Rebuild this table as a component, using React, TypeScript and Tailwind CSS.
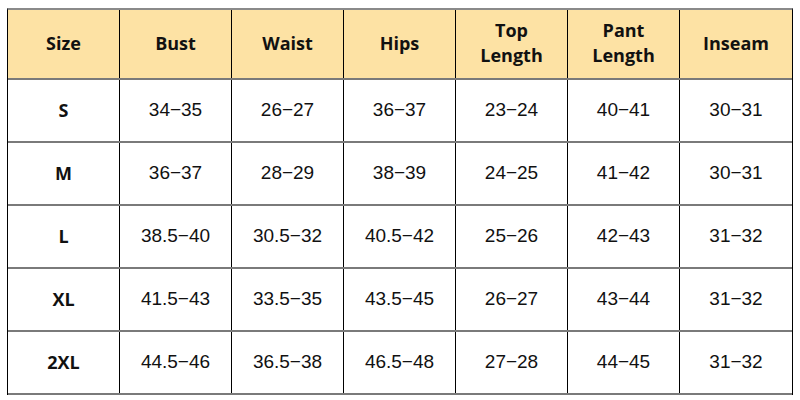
const headers = ["Size", "Bust", "Waist", "Hips", "Top\nLength", "Pant\nLength", "Inseam"];

const rows = [
  ["S", "34−35", "26−27", "36−37", "23−24", "40−41", "30−31"],
  ["M", "36−37", "28−29", "38−39", "24−25", "41−42", "30−31"],
  ["L", "38.5−40", "30.5−32", "40.5−42", "25−26", "42−43", "31−32"],
  ["XL", "41.5−43", "33.5−35", "43.5−45", "26−27", "43−44", "31−32"],
  ["2XL", "44.5−46", "36.5−38", "46.5−48", "27−28", "44−45", "31−32"],
];

export default function App() {
  return (
    <div className="w-[800px] h-[400px] bg-white pt-[8px] px-[7px]">
      <div className="border-t-2 border-[#8a8a8a] border-l border-r border-l-black border-r-black">
        <div className="grid grid-cols-7 h-[70px] bg-[#fde2a4] border-b-2 border-[#7a7a7a]">
          {headers.map((h, i) => (
            <div
              key={h}
              className={`flex items-center justify-center pb-[2px] text-center whitespace-pre-line font-['Open_Sans',_sans-serif] font-bold text-[18px] leading-[25px] text-[#111] ${i < 6 ? "border-r border-black" : ""}`}
            >
              {h}
            </div>
          ))}
        </div>
        {rows.map((r) => (
          <div key={r[0]} className="grid grid-cols-7 h-[63px] border-b-2 border-[#7a7a7a]">
            {r.map((c, i) => (
              <div
                key={i}
                className={`flex items-center justify-center text-[#111] ${i === 0 ? "font-['Open_Sans',_sans-serif] font-bold text-[18px]" : "font-['Liberation_Sans',_sans-serif] text-[19px]"} ${i < 6 ? "border-r border-black" : ""}`}
              >
                {c}
              </div>
            ))}
          </div>
        ))}
      </div>
    </div>
  );
}
